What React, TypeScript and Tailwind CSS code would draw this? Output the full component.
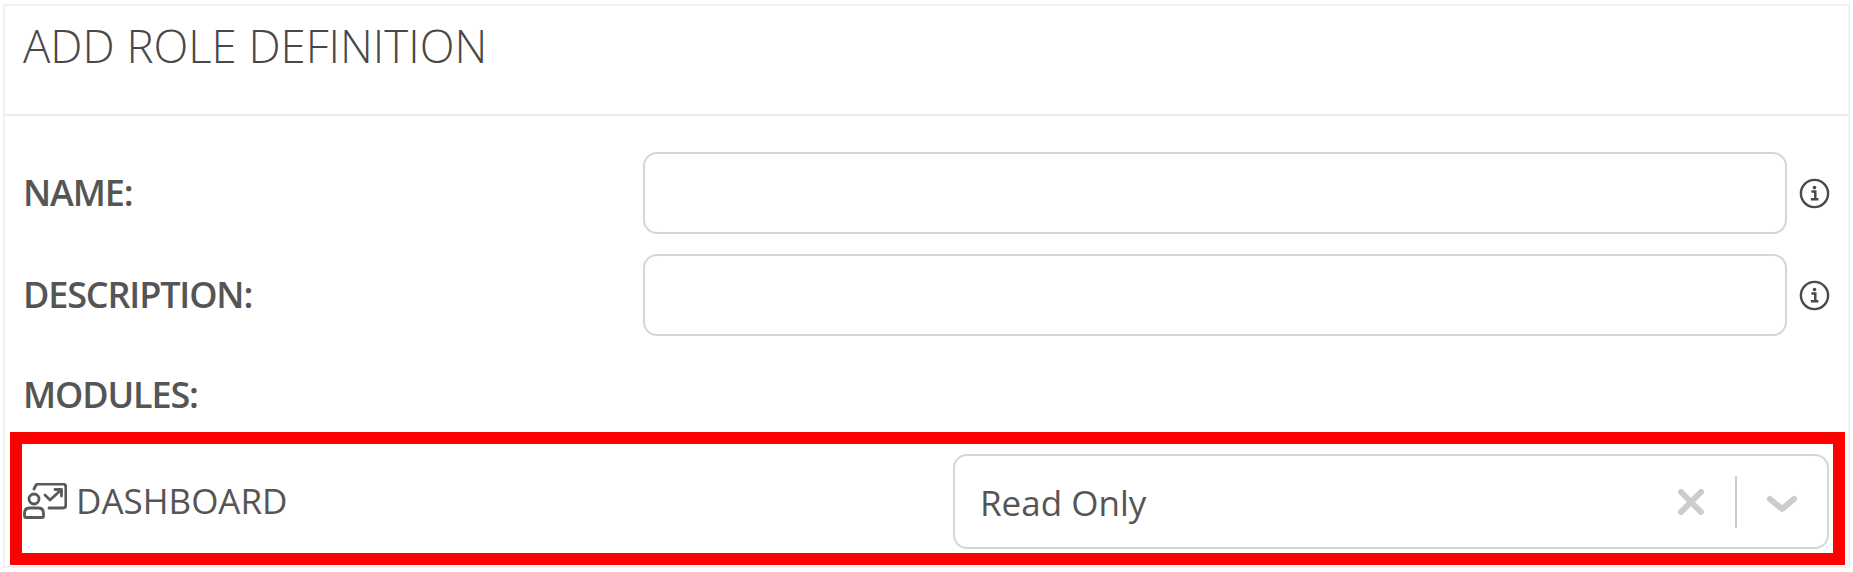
import React from "react";

function InfoIcon() {
  return (
    <svg width="31" height="31" viewBox="0 0 31 31" fill="none" className="shrink-0">
      <circle cx="15.5" cy="15.5" r="13.6" stroke="#4a4a4a" strokeWidth="2.4" />
      <circle cx="15.5" cy="9.6" r="1.8" fill="#4a4a4a" />
      <path d="M12.4 13.6h3.9v7.2M11.8 21.2h7.6" stroke="#4a4a4a" strokeWidth="2.5" />
    </svg>
  );
}

function DashIcon() {
  return (
    <svg width="44" height="36" viewBox="0 0 44 36" fill="none" stroke="#5a5a5a" strokeWidth="2.8" className="shrink-0">
      <path d="M11 6 L13 2 Q13.5 1.2 15 1.2 H40 Q42.8 1.2 42.8 4 V22 Q42.8 25 40 25 H26" strokeLinecap="round" />
      <path d="M22 12 L27 17 L38 7 M32 6.5 H38.5 V13" strokeLinecap="round" strokeLinejoin="round" />
      <circle cx="11" cy="16" r="5" />
      <path d="M1.5 33 V30 Q1.5 25 7 25 H15 Q20.5 25 20.5 30 V33 Q20.5 34.5 19 34.5 H3 Q1.5 34.5 1.5 33 Z" />
    </svg>
  );
}

function Row({ label, className }: { label: string; className: string }) {
  return (
    <div className={`flex items-center ${className}`}>
      <div className="w-[638px] shrink-0 pl-[18px] text-[36px] font-semibold text-[#555555] tracking-[-1.15px]">{label}</div>
      <div className="h-[82px] w-[1144px] shrink-0 rounded-[14px] border-2 border-[#d6d6d6] bg-white" />
      <div className="ml-[12px]"><InfoIcon /></div>
    </div>
  );
}

export default function App() {
  return (
    <div className="h-[572px] w-[1853px] overflow-hidden bg-white pl-[3px] pr-[3px] pt-[4px] font-['Open_Sans',sans-serif]">
      <div className="h-[564px] w-[1847px] border-2 border-[#f1f1f1] bg-white">
        <div className="h-[110px] border-b-2 border-[#ececec] pl-[18px] pt-[9px] text-[45.5px] font-light leading-[60px] text-[#484848]">
          ADD ROLE DEFINITION
        </div>
        <Row label="NAME:" className="mt-[36px]" />
        <Row label="DESCRIPTION:" className="mt-[20px]" />
        <div className="mt-[37px] h-[44px] pl-[18px] text-[36px] font-semibold leading-[44px] text-[#555555] tracking-[-1.15px]">MODULES:</div>
        <div className="ml-[5px] mt-[15px] flex h-[133px] w-[1835px] items-start border-[12px] border-[#ff0000] bg-white">
          <div className="mt-[33px] flex w-[931px] shrink-0 items-center pl-[1px]">
            <DashIcon />
            <span className="ml-[9px] text-[35px] leading-[48px] text-[#555555]">DASHBOARD</span>
          </div>
          <div className="mt-[10px] flex h-[95px] w-[876px] shrink-0 items-center rounded-[14px] border-2 border-[#d6d6d6] bg-white pl-[25px]">
            <span className="flex-1 pt-[4px] text-[35px] text-[#555555]">Read Only</span>
            <svg width="26" height="26" viewBox="0 0 26 26" className="ml-[1px] mt-[1px] shrink-0" fill="none" stroke="#cccccc" strokeWidth="6" strokeLinecap="round">
              <path d="M3 3 L23 23 M23 3 L3 23" />
            </svg>
            <div className="ml-[31px] h-[52px] w-[2px] bg-[#cccccc]" />
            <svg width="30" height="18" viewBox="0 0 30 18" className="ml-[30px] mr-[30px] mt-[4px] shrink-0" fill="none" stroke="#cccccc" strokeWidth="6" strokeLinecap="round" strokeLinejoin="round">
              <path d="M3 4 L15 14 L27 4" />
            </svg>
          </div>
        </div>
      </div>
    </div>
  );
}
